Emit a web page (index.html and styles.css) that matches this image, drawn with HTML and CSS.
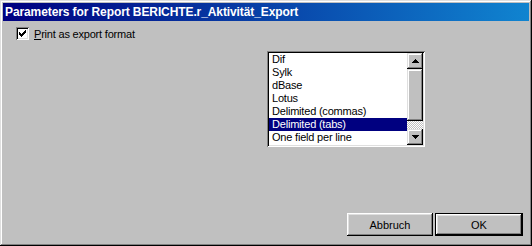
FILE: index.html
```html
<!DOCTYPE html>
<html>
<head>
<meta charset="utf-8">
<link rel="stylesheet" href="styles.css">
</head>
<body>
<div class="window">
  <div class="titlebar">Parameters for Report BERICHTE.r_Aktivität_Export</div>
  <div class="content">
    <label class="check-row">
      <span class="checkbox">
        <svg width="7" height="7" viewBox="0 0 7 7"><path d="M0 2h1v1h1v1h1V3h1V2h1V1h1V0h1v3H6v1H5v1H4v1H3v1H2V6H1V5H0z" fill="#000"/></svg>
      </span>
      <span class="label"><u>P</u>rint as export format</span>
    </label>
    <div class="list-row">
      <div class="listbox">
        <ul class="items">
          <li>Dif</li>
          <li>Sylk</li>
          <li>dBase</li>
          <li>Lotus</li>
          <li>Delimited (commas)</li>
          <li class="selected">Delimited (tabs)</li>
          <li>One field per line</li>
        </ul>
        <div class="scrollbar">
          <div class="sb-btn"><svg width="7" height="4" viewBox="0 0 7 4"><path d="M3 0h1v1h1v1h1v1h1v1H0V3h1V2h1V1h1z" fill="#000"/></svg></div>
          <div class="sb-thumb"></div>
          <div class="sb-track"></div>
          <div class="sb-btn"><svg width="7" height="4" viewBox="0 0 7 4"><path d="M0 0h7v1H6v1H5v1H4v1H3V3H2V2H1V1H0z" fill="#000"/></svg></div>
        </div>
      </div>
    </div>
    <div class="footer">
      <button class="btn">Abbruch</button>
      <button class="btn default">OK</button>
    </div>
  </div>
</div>
</body>
</html>
```
FILE: styles.css
```css
html, body {
  margin: 0;
  padding: 0;
  background: #c0c0c0;
}
body {
  font-family: "Liberation Sans", Arial, sans-serif;
  font-size: 11px;
  color: #000;
}
.window {
  width: 532px;
  height: 246px;
  box-sizing: border-box;
  padding: 3px;
  background: #c0c0c0;
  box-shadow: inset -1px -1px #000, inset 1px 1px #dfdfdf, inset -2px -2px #808080, inset 2px 2px #fff;
  display: flex;
  flex-direction: column;
}
.titlebar {
  height: 18px;
  line-height: 18px;
  padding-left: 2px;
  background: linear-gradient(to right, #000080, #1084d0);
  color: #fff;
  font-weight: bold;
  font-size: 12px;
  letter-spacing: -0.1px;
  white-space: nowrap;
}
.content {
  flex: 1;
  display: flex;
  flex-direction: column;
}
.check-row {
  display: flex;
  align-items: center;
  gap: 5px;
  margin: 6px 0 0 13px;
  height: 13px;
}
.checkbox {
  width: 13px;
  height: 13px;
  box-sizing: border-box;
  background: #fff;
  box-shadow: inset 1px 1px #808080, inset -1px -1px #fff, inset 2px 2px #000, inset -2px -2px #dfdfdf;
  display: flex;
  align-items: center;
  justify-content: center;
}
.label {
  letter-spacing: -0.2px;
}
.list-row {
  margin: 11px 0 0 264px;
  display: flex;
}
.listbox {
  width: 158px;
  height: 96px;
  box-sizing: border-box;
  padding: 2px;
  background: #fff;
  box-shadow: inset 1px 1px #808080, inset -1px -1px #fff, inset 2px 2px #000, inset -2px -2px #dfdfdf;
  display: flex;
}
.items {
  list-style: none;
  margin: 0;
  padding: 0;
  flex: 1;
}
.items li {
  height: 13px;
  line-height: 13px;
  padding-left: 3px;
  white-space: nowrap;
  letter-spacing: -0.2px;
}
.items li.selected {
  background: #000080;
  color: #fff;
}
.scrollbar {
  width: 16px;
  display: flex;
  flex-direction: column;
}
.sb-btn, .sb-thumb {
  background: #c0c0c0;
  box-shadow: inset -1px -1px #000, inset 1px 1px #dfdfdf, inset -2px -2px #808080, inset 2px 2px #fff;
}
.sb-btn {
  height: 16px;
  display: flex;
  align-items: center;
  justify-content: center;
}
.sb-thumb {
  height: 52px;
}
.sb-track {
  flex: 1;
  background: repeating-conic-gradient(#c0c0c0 0 25%, #fff 0 50%) 0 0 / 2px 2px;
}
.footer {
  margin-top: auto;
  display: flex;
  justify-content: flex-end;
  align-items: center;
  gap: 2px;
  padding: 0 6px 7px 0;
}
.btn {
  font-family: "Liberation Sans", Arial, sans-serif;
  font-size: 11px;
  color: #000;
  width: 86px;
  height: 23px;
  padding: 0;
  border: 0;
  margin: 0;
  background: #c0c0c0;
  box-shadow: inset -1px -1px #000, inset 1px 1px #fff, inset -2px -2px #808080, inset 2px 2px #dfdfdf;
}
.btn.default {
  width: 88px;
  box-shadow: inset 0 0 0 1px #000, inset -2px -2px #000, inset 2px 2px #fff, inset -3px -3px #808080, inset 3px 3px #dfdfdf;
}
```
